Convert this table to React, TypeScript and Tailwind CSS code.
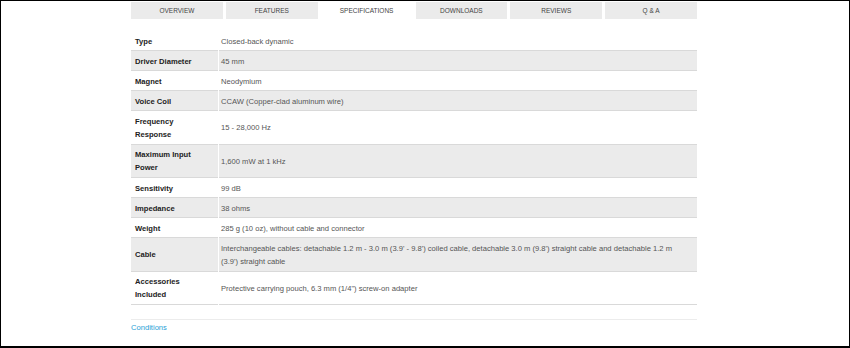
import React from 'react'

const tabs = ['Overview', 'Features', 'Specifications', 'Downloads', 'Reviews', 'Q & A']

const specs: { label: string[]; value: string[] }[] = [
  { label: ['Type'], value: ['Closed-back dynamic'] },
  { label: ['Driver Diameter'], value: ['45 mm'] },
  { label: ['Magnet'], value: ['Neodymium'] },
  { label: ['Voice Coil'], value: ['CCAW (Copper-clad aluminum wire)'] },
  { label: ['Frequency', 'Response'], value: ['15 - 28,000 Hz'] },
  { label: ['Maximum Input', 'Power'], value: ['1,600 mW at 1 kHz'] },
  { label: ['Sensitivity'], value: ['99 dB'] },
  { label: ['Impedance'], value: ['38 ohms'] },
  { label: ['Weight'], value: ['285 g (10 oz), without cable and connector'] },
  {
    label: ['Cable'],
    value: [
      "Interchangeable cables: detachable 1.2 m - 3.0 m (3.9' - 9.8') coiled cable, detachable 3.0 m (9.8') straight cable and detachable 1.2 m",
      "(3.9') straight cable",
    ],
  },
  { label: ['Accessories', 'Included'], value: ['Protective carrying pouch, 6.3 mm (1/4") screw-on adapter'] },
]

export default function App() {
  return (
    <div
      className="w-[850px] h-[348px] border border-b-2 border-black bg-white overflow-hidden"
      style={{ fontFamily: '"Liberation Sans", Arial, sans-serif' }}
    >
      <div className="ml-[130px] w-[566px] pt-[1px]">
        {/* tab strip */}
        <div className="grid grid-cols-6 gap-[3px]">
          {tabs.map((t) => (
            <div
              key={t}
              className={`h-[17px] flex items-center justify-center uppercase text-[6.5px] text-[#444] ${
                t === 'Specifications' ? 'bg-white' : 'bg-[#ebebeb]'
              }`}
            >
              {t}
            </div>
          ))}
        </div>

        {/* spec table */}
        <div className="mt-[12px] text-[7.6px] leading-[13px]">
          {specs.map((row, i) => {
            const shade = i % 2 === 1 ? 'bg-[#ebebeb]' : 'bg-white'
            const tall = row.label.length > 1 || row.value.length > 1
            return (
              <div key={row.label[0]} className={`flex gap-[1px] ${tall ? 'h-[33.5px]' : 'h-[20px]'}`}>
                <div className={`w-[87px] shrink-0 pl-[4px] pt-[1px] border-b border-[#d9d9d9] font-bold text-[#222] flex flex-col justify-center ${shade}`}>
                  {row.label.map((l) => (
                    <span key={l}>{l}</span>
                  ))}
                </div>
                <div className={`flex-1 pl-[2px] pt-[1px] border-b border-[#d9d9d9] text-[#555] flex flex-col justify-center ${shade}`}>
                  {row.value.map((v) => (
                    <span key={v}>{v}</span>
                  ))}
                </div>
              </div>
            )
          })}
        </div>

        <div className="mt-[14px] border-t border-[#ececec] pt-[1px] text-[7.6px] leading-[13px] text-[#2a9fd6]">
          Conditions
        </div>
      </div>
    </div>
  )
}
